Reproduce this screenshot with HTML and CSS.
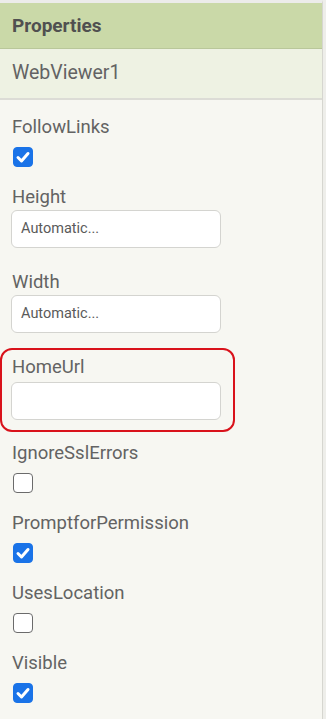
FILE: index.html
```html
<!DOCTYPE html>
<html>
<head>
<meta charset="utf-8">
<link rel="stylesheet" href="styles.css">
</head>
<body>
<div class="panel">
  <div class="header">Properties</div>
  <div class="component">WebViewer1</div>
  <div class="props">
    <div class="prop check-prop">
      <div class="label">FollowLinks</div>
      <span class="checkbox checked"><svg viewBox="0 0 20 20"><path d="M5 10.5 L8.5 14 L15 6.5" /></svg></span>
    </div>
    <div class="prop text-prop">
      <div class="label">Height</div>
      <div class="input">Automatic...</div>
    </div>
    <div class="prop text-prop">
      <div class="label">Width</div>
      <div class="input">Automatic...</div>
    </div>
    <div class="highlight">
      <div class="label">HomeUrl</div>
      <div class="input"></div>
    </div>
    <div class="prop check-prop">
      <div class="label">IgnoreSslErrors</div>
      <span class="checkbox"></span>
    </div>
    <div class="prop check-prop">
      <div class="label">PromptforPermission</div>
      <span class="checkbox checked"><svg viewBox="0 0 20 20"><path d="M5 10.5 L8.5 14 L15 6.5" /></svg></span>
    </div>
    <div class="prop check-prop">
      <div class="label">UsesLocation</div>
      <span class="checkbox"></span>
    </div>
    <div class="prop check-prop">
      <div class="label">Visible</div>
      <span class="checkbox checked"><svg viewBox="0 0 20 20"><path d="M5 10.5 L8.5 14 L15 6.5" /></svg></span>
    </div>
  </div>
</div>
</body>
</html>
```
FILE: styles.css
```css
html, body {
  margin: 0;
  padding: 0;
}
body {
  background: #eeeeea;
  font-family: Roboto, "Liberation Sans", sans-serif;
  color: #626262;
}
.panel {
  width: 323px;
  min-height: 719px;
  background: #f7f7f2;
  border-right: 1px solid #d6d6d0;
  border-top: 3px solid #ececea;
  box-sizing: border-box;
}
.header {
  height: 45px;
  line-height: 45px;
  background: #cad9a8;
  border-bottom: 1px solid #b9c79a;
  padding-left: 12px;
  font-size: 19px;
  font-weight: bold;
  color: #505050;
}
.component {
  height: 49px;
  line-height: 48px;
  background: #eef2e3;
  border-bottom: 2px solid #dcdcd6;
  padding-left: 12px;
  font-size: 19.5px;
  color: #636363;
}
.props {
  display: flex;
  flex-direction: column;
  padding: 16px 0 0 11px;
}
.label {
  height: 22px;
  line-height: 22px;
  font-size: 18.5px;
  padding-left: 1px;
  color: #636363;
}
.check-prop {
  display: flex;
  flex-direction: column;
  align-items: flex-start;
  margin-bottom: 19px;
}
.check-prop .label {
  margin-bottom: 9px;
}
.checkbox {
  display: block;
  width: 20px;
  height: 20px;
  margin-left: 2px;
  box-sizing: border-box;
  border: 1.5px solid #6b6b6b;
  border-radius: 4px;
  background: #fff;
}
.checkbox.checked {
  background: #1a73e8;
  border-color: #1a73e8;
}
.checkbox svg {
  display: block;
  margin: -1.5px 0 0 -1.5px;
  width: 20px;
  height: 20px;
  fill: none;
  stroke: #fff;
  stroke-width: 3;
  stroke-linecap: round;
  stroke-linejoin: round;
}
.text-prop {
  display: flex;
  flex-direction: column;
  margin-bottom: 23px;
}
.text-prop .label {
  margin-bottom: 2px;
}
.input {
  width: 210px;
  height: 38px;
  box-sizing: border-box;
  background: #fff;
  border: 1.5px solid #d4d4d0;
  border-radius: 6px;
  padding-left: 9px;
  line-height: 35px;
  font-size: 14.5px;
  color: #5a5a5a;
}
.highlight {
  margin: -8px 0 10px -11px;
  width: 235px;
  box-sizing: border-box;
  border: 2px solid #d9121b;
  border-radius: 12px;
  padding: 6px 12px 10px 9px;
}
.highlight .label {
  margin-bottom: 4px;
}
```
